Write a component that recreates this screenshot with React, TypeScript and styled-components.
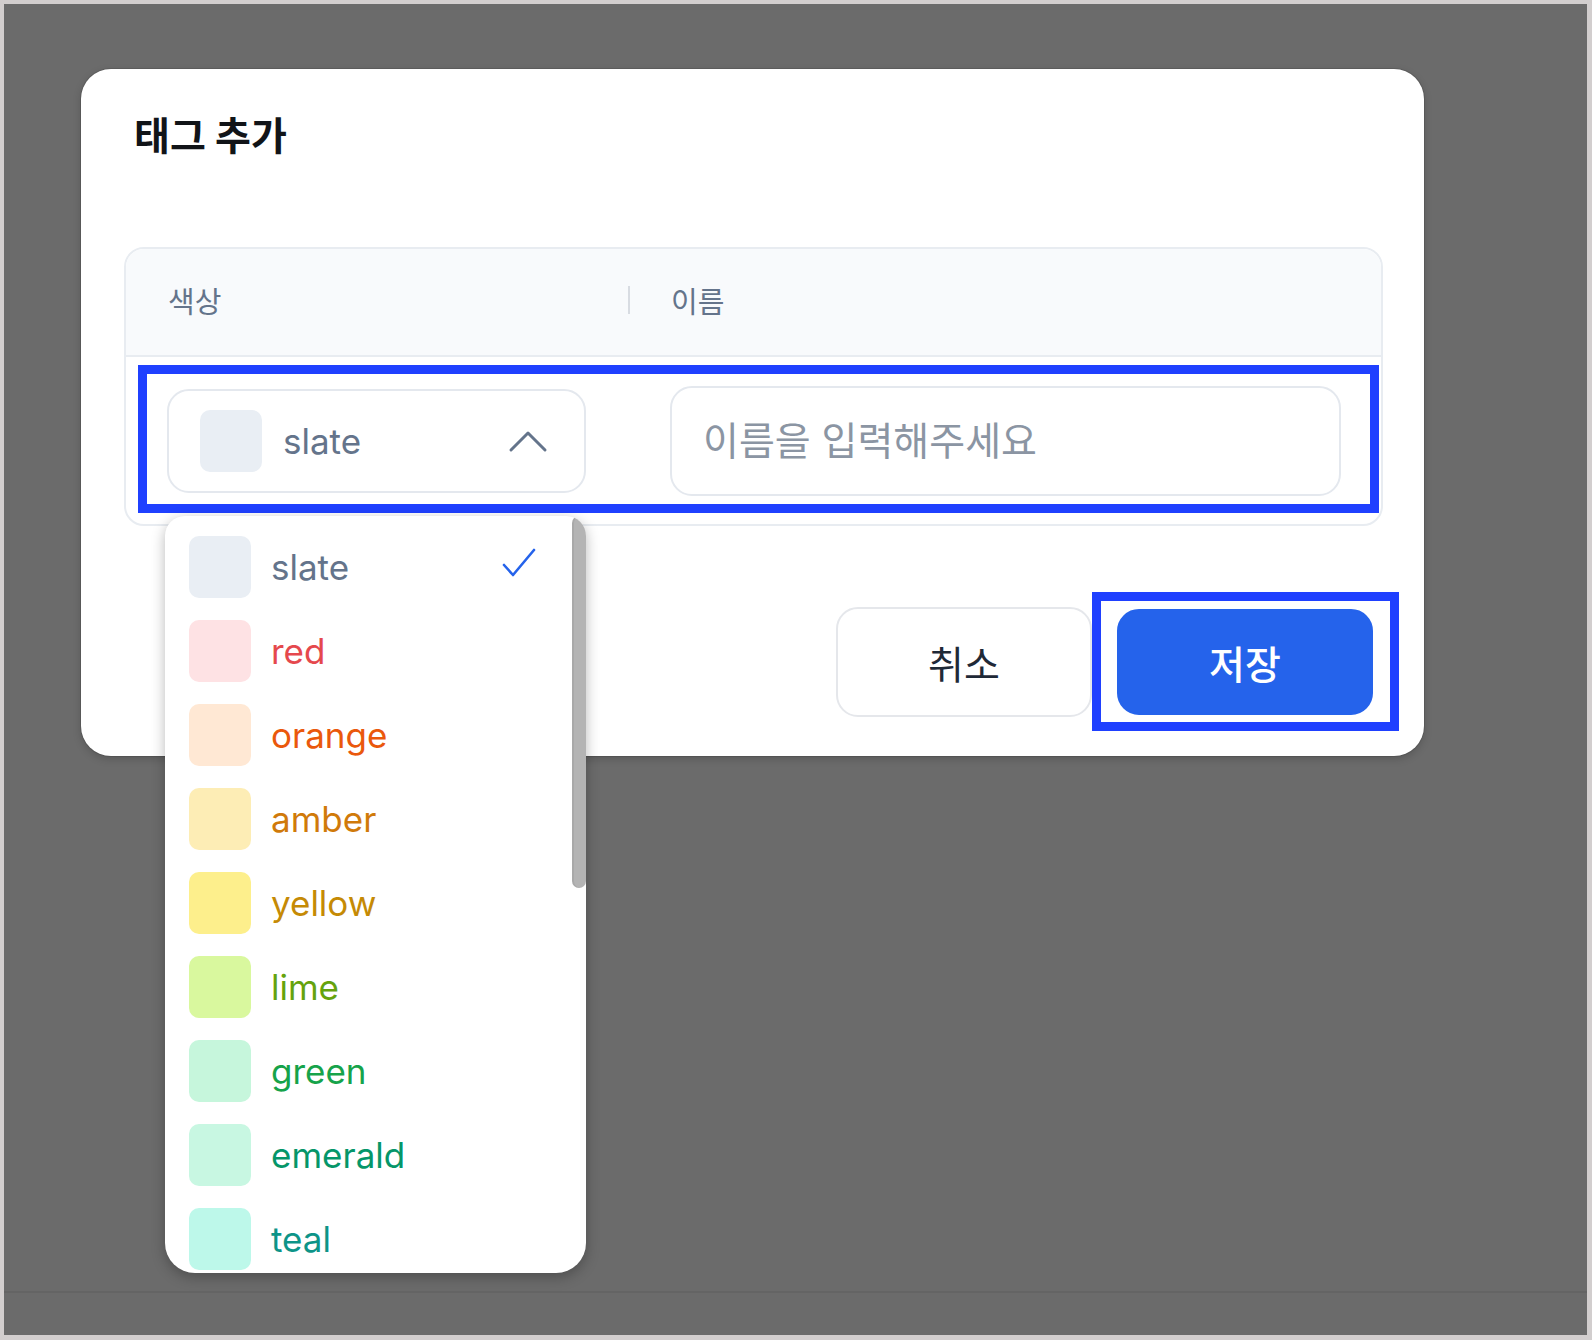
import styled, { createGlobalStyle } from 'styled-components';

const GlobalStyle = createGlobalStyle`
  html, body {
    margin: 0;
    padding: 0;
    background: #6b6b6b;
  }
  body {
    font-family: "Inter", "Noto Sans CJK KR", "Noto Sans", sans-serif;
  }
  * {
    box-sizing: border-box;
  }
`;

const Frame = styled.div`
  width: 1592px;
  height: 1340px;
  border: 4px solid #d2cece;
  border-right-width: 5px;
  border-bottom-width: 5px;
  background: #6b6b6b;
  display: flex;
  flex-direction: column;
  overflow: hidden;
`;

const Backdrop = styled.div`
  flex: 1;
  padding: 65px 0 0 77px;
`;

const PageEdge = styled.div`
  height: 44px;
  border-top: 2px solid rgba(0, 0, 0, 0.06);
`;

const Modal = styled.div`
  width: 1343px;
  height: 687px;
  padding: 42px 41px 39px 43px;
  background: #fff;
  border-radius: 30px;
  box-shadow: 0 0 0 1px rgba(0, 0, 0, 0.1), 0 3px 8px rgba(0, 0, 0, 0.18);
  display: flex;
  flex-direction: column;
`;

const Title = styled.h2`
  margin: 0 0 0 10px;
  font-size: 39px;
  line-height: 50px;
  font-weight: 700;
  color: #111418;
`;

const Table = styled.div`
  margin-top: 86px;
  border: 2px solid #e8ecf1;
  border-radius: 20px;
`;

const HeaderRow = styled.div`
  display: grid;
  grid-template-columns: 502px 1fr;
  height: 108px;
  background: #f8fafc;
  border-bottom: 2px solid #e8ecf1;
  border-radius: 18px 18px 0 0;
`;

const HeaderCell = styled.div<{ $divider?: boolean }>`
  position: relative;
  display: flex;
  align-items: center;
  padding-left: ${(p) => (p.$divider ? 43 : 42)}px;
  padding-bottom: 4px;
  font-size: 29px;
  font-weight: 400;
  color: #64748b;

  ${(p) =>
    p.$divider &&
    `
    &::before {
      content: '';
      position: absolute;
      left: 0;
      top: 50%;
      width: 2px;
      height: 28px;
      margin-top: -16px;
      background: #d8dce2;
    }
  `}
`;

const BodyRow = styled.div`
  position: relative;
  display: grid;
  grid-template-columns: 502px 1fr;
  height: 167px;
  align-items: center;
`;

const RowMark = styled.div`
  position: absolute;
  left: 12px;
  right: 2px;
  top: 8px;
  bottom: 11px;
  border: 9px solid #1f40ff;
  pointer-events: none;
`;

const SelectWrap = styled.div`
  position: relative;
  margin-left: 41px;
  width: 419px;
`;

const SelectButton = styled.button`
  width: 100%;
  height: 104px;
  display: flex;
  align-items: center;
  gap: 21px;
  padding: 0 36px 0 31px;
  background: #fff;
  border: 2px solid #e4e8ee;
  border-radius: 22px;
  font-family: inherit;
  font-size: 35px;
  color: #64748b;
  cursor: pointer;

  svg {
    margin-left: auto;
  }
`;

const Swatch = styled.span<{ $bg: string }>`
  flex: none;
  width: 62px;
  height: 62px;
  border-radius: 10px;
  background: ${(p) => p.$bg};
`;

const NameInput = styled.input`
  margin: 0 40px 0 42px;
  height: 110px;
  padding: 0 0 0 31px;
  border: 2px solid #e4e8ee;
  border-radius: 22px;
  font-family: inherit;
  font-size: 39px;
  color: #1f2937;
  outline: none;

  &::placeholder {
    color: #8b95a3;
  }
`;

const Dropdown = styled.div`
  position: absolute;
  left: -2px;
  top: calc(100% + 23px);
  width: 421px;
  height: 757px;
  background: #fff;
  border-radius: 20px 20px 30px 30px;
  box-shadow: 0 4px 14px rgba(0, 0, 0, 0.28);
  overflow: hidden;
  z-index: 5;
`;

const OptionList = styled.ul`
  list-style: none;
  margin: 0;
  padding: 9px 14px 0 0;
  height: 100%;
  overflow: hidden;
`;

const ScrollThumb = styled.div`
  position: absolute;
  top: 0;
  right: 0;
  width: 14px;
  height: 372px;
  border-radius: 7px;
  background: #b4b4b4;
  box-shadow: inset 2px 0 0 rgba(0, 0, 0, 0.06);
`;

const OptionItem = styled.li<{ $color: string }>`
  flex: none;
  height: 84px;
  display: flex;
  align-items: center;
  gap: 20px;
  padding: 0 36px 0 24px;
  font-size: 35px;
  color: ${(p) => p.$color};
  cursor: pointer;

  svg {
    margin-left: auto;
    margin-top: -8px;
  }
`;

const Actions = styled.div`
  margin-top: auto;
  display: flex;
  justify-content: flex-end;
  align-items: center;
  gap: 25px;
  padding-right: 10px;
`;

const Button = styled.button<{ $primary?: boolean }>`
  position: relative;
  width: 256px;
  height: ${(p) => (p.$primary ? 106 : 110)}px;
  border-radius: 22px;
  border: 2px solid ${(p) => (p.$primary ? '#2563eb' : '#e5e7eb')};
  background: ${(p) => (p.$primary ? '#2563eb' : '#fff')};
  color: ${(p) => (p.$primary ? '#fff' : '#1f2937')};
  font-family: inherit;
  font-size: 39px;
  font-weight: ${(p) => (p.$primary ? 500 : 400)};
  cursor: pointer;
`;

const ButtonMark = styled.span`
  position: absolute;
  left: -27px;
  right: -28px;
  top: -19px;
  bottom: -18px;
  border: 9px solid #1f40ff;
  pointer-events: none;
`;

const colors = [
  { name: 'slate', bg: '#e9eef4', fg: '#64748b' },
  { name: 'red', bg: '#fee2e4', fg: '#e5484d' },
  { name: 'orange', bg: '#ffe8d4', fg: '#ea580c' },
  { name: 'amber', bg: '#fdedb5', fg: '#d07a0a' },
  { name: 'yellow', bg: '#fdef8c', fg: '#c58a05' },
  { name: 'lime', bg: '#d9f89e', fg: '#65a30d' },
  { name: 'green', bg: '#c6f6dc', fg: '#16a34a' },
  { name: 'emerald', bg: '#c8f7e2', fg: '#059669' },
  { name: 'teal', bg: '#bdf8ea', fg: '#0d9488' },
];

const ChevronUp = () => (
  <svg width="40" height="26" viewBox="0 0 40 26" fill="none">
    <path d="M3 22 L20 5 L37 22" stroke="#64748b" strokeWidth="3" strokeLinecap="round" strokeLinejoin="round" />
  </svg>
);

const Check = () => (
  <svg width="34" height="32" viewBox="0 0 34 32" fill="none">
    <path d="M2 18 L11 28 L32 3" stroke="#2563eb" strokeWidth="2.6" strokeLinecap="round" strokeLinejoin="round" />
  </svg>
);

const App = () => {
  const selected = colors[0];

  return (
    <>
      <GlobalStyle />
      <Frame>
        <Backdrop>
          <Modal>
            <Title>태그 추가</Title>
            <Table>
              <HeaderRow>
                <HeaderCell>색상</HeaderCell>
                <HeaderCell $divider>이름</HeaderCell>
              </HeaderRow>
              <BodyRow>
                <RowMark />
                <SelectWrap>
                  <SelectButton>
                    <Swatch $bg={selected.bg} />
                    {selected.name}
                    <ChevronUp />
                  </SelectButton>
                  <Dropdown>
                    <OptionList>
                      {colors.map((c) => (
                        <OptionItem key={c.name} $color={c.fg}>
                          <Swatch $bg={c.bg} />
                          {c.name}
                          {c.name === selected.name && <Check />}
                        </OptionItem>
                      ))}
                    </OptionList>
                    <ScrollThumb />
                  </Dropdown>
                </SelectWrap>
                <NameInput placeholder="이름을 입력해주세요" />
              </BodyRow>
            </Table>
            <Actions>
              <Button>취소</Button>
              <Button $primary>
                저장
                <ButtonMark />
              </Button>
            </Actions>
          </Modal>
        </Backdrop>
        <PageEdge />
      </Frame>
    </>
  );
};

export default App;
